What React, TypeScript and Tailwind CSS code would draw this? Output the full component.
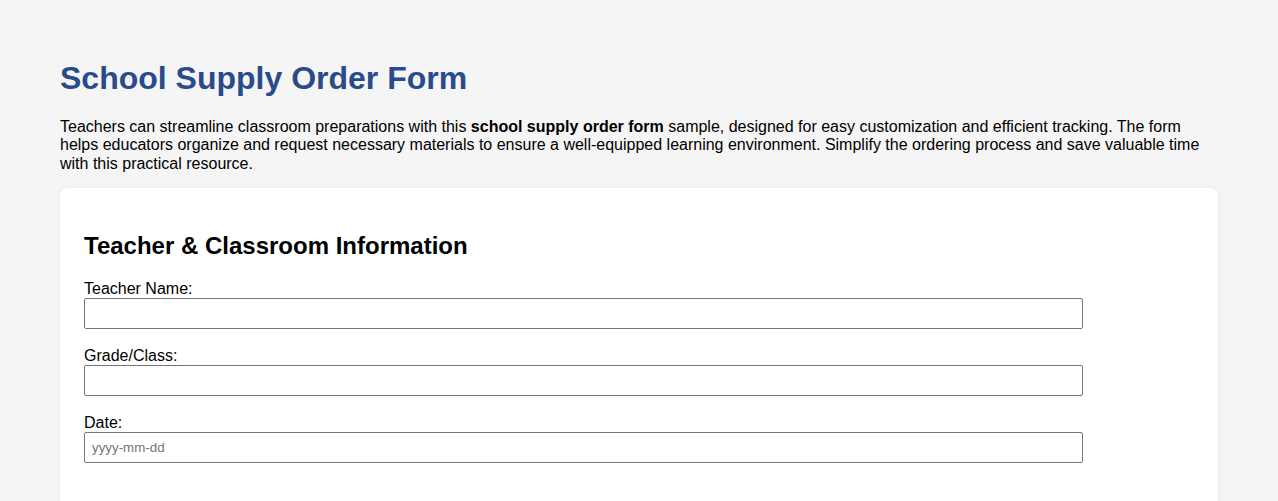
import React from "react";

export default function App() {
  const fields = [
    { label: "Teacher Name:", type: "text", placeholder: "" },
    { label: "Grade/Class:", type: "text", placeholder: "" },
    { label: "Date:", type: "text", placeholder: "yyyy-mm-dd" },
  ];
  return (
    <div
      className="min-h-screen bg-[#f5f5f5] text-black"
      style={{ fontFamily: '"Liberation Sans", Arial, sans-serif' }}
    >
      <div className="mx-[60px] pt-[60px] pb-10">
        <h1 className="text-[32px] leading-[37px] font-bold text-[#2a4b8a]">
          School Supply Order Form
        </h1>
        <p className="mt-[21px] text-[16px] leading-[18.4px]">
          Teachers can streamline classroom preparations with this{" "}
          <strong className="font-bold">school supply order form</strong> sample,
          designed for easy customization and efficient tracking. The form helps
          educators organize and request necessary materials to ensure a
          well-equipped learning environment. Simplify the ordering process and
          save valuable time with this practical resource.
        </p>
        <div className="mt-[15px] bg-white rounded-lg shadow-[0_0_6px_rgba(0,0,0,0.06)] p-6 pb-20">
          <h2 className="mt-5 mb-5 text-[24px] leading-[27.6px] font-bold">
            Teacher &amp; Classroom Information
          </h2>
          <div className="flex flex-col gap-[18px]">
            {fields.map((f) => (
              <div key={f.label}>
                <label className="block text-[16px] leading-[18px]">{f.label}</label>
                <input
                  type={f.type}
                  placeholder={f.placeholder}
                  className="block w-[90%] h-[31px] border border-[#767676] rounded-[2px] px-[7px] text-[13.33px] placeholder:text-[#757575] outline-none bg-white"
                  style={{ fontFamily: '"Liberation Sans", Arial, sans-serif' }}
                />
              </div>
            ))}
          </div>
        </div>
      </div>
    </div>
  );
}
